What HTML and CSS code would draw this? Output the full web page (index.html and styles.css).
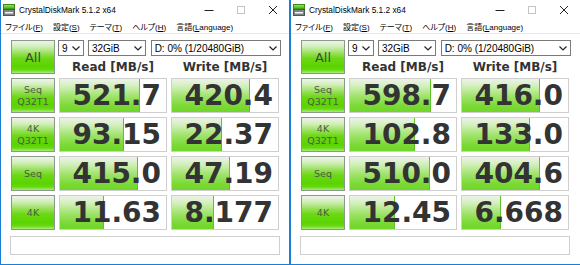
FILE: index.html
```html
<!DOCTYPE html>
<html lang="ja">
<head>
<meta charset="utf-8">
<title>CrystalDiskMark</title>
<link rel="stylesheet" href="styles.css">
</head>
<body>
<div class="desk">
  <div class="win">
    <div class="titlebar">
      <svg class="appicon" width="12" height="12" viewBox="0 0 12 12"><defs><linearGradient id="g1" x1="0" y1="0" x2="0" y2="1"><stop offset="0" stop-color="#9be86a"/><stop offset="1" stop-color="#3cb000"/></linearGradient></defs><rect x="0.5" y="0.5" width="11" height="4.5" fill="url(#g1)" stroke="#3a8a1a" stroke-width="1"/><rect x="0.5" y="5.5" width="11" height="6" fill="#7d8388" stroke="#50565a" stroke-width="1"/><rect x="2" y="8" width="8" height="1.5" fill="#f4f4f4"/></svg>
      <span class="title">CrystalDiskMark 5.1.2 x64</span>
      <div class="controls">
        <span class="ctl"><svg width="10" height="10" viewBox="0 0 10 10"><line x1="0.5" y1="5.5" x2="9.5" y2="5.5" stroke="#222" stroke-width="1"/></svg></span>
        <span class="ctl"><svg width="10" height="10" viewBox="0 0 10 10"><rect x="1.5" y="1.5" width="7" height="7" fill="none" stroke="#c4c4c4" stroke-width="1"/></svg></span>
        <span class="ctl"><svg width="10" height="10" viewBox="0 0 10 10"><path d="M1 1 L9 9 M9 1 L1 9" stroke="#222" stroke-width="1"/></svg></span>
      </div>
    </div>
    <div class="menubar">
      <span>ファイル(<u>F</u>)</span><span>設定(<u>S</u>)</span><span>テーマ(<u>T</u>)</span><span>ヘルプ(<u>H</u>)</span><span>言語(<u>L</u>anguage)</span>
    </div>
    <div class="content">
      <div class="btn all">All</div>
      <div class="combos">
        <div class="combo c1"><span>9</span><svg width="8" height="5" viewBox="0 0 8 5"><polyline points="0.5,0.5 4,4 7.5,0.5" fill="none" stroke="#222" stroke-width="1.2"/></svg></div>
        <div class="combo c2"><span>32GiB</span><svg width="8" height="5" viewBox="0 0 8 5"><polyline points="0.5,0.5 4,4 7.5,0.5" fill="none" stroke="#222" stroke-width="1.2"/></svg></div>
        <div class="combo c3"><span>D: 0% (1/20480GiB)</span><svg width="8" height="5" viewBox="0 0 8 5"><polyline points="0.5,0.5 4,4 7.5,0.5" fill="none" stroke="#222" stroke-width="1.2"/></svg></div>
      </div>
      <div class="head">Read [MB/s]</div>
      <div class="head">Write [MB/s]</div>

      <div class="btn"><span>Seq</span><span>Q32T1</span></div>
      <div class="cell"><div class="bar" style="width:80px"></div><div class="val">521.7</div></div>
      <div class="cell"><div class="bar" style="width:78px"></div><div class="val">420.4</div></div>

      <div class="btn"><span>4K</span><span>Q32T1</span></div>
      <div class="cell"><div class="bar" style="width:64px"></div><div class="val">93.15</div></div>
      <div class="cell"><div class="bar" style="width:50px"></div><div class="val">22.37</div></div>

      <div class="btn"><span>Seq</span></div>
      <div class="cell"><div class="bar" style="width:78px"></div><div class="val">415.0</div></div>
      <div class="cell"><div class="bar" style="width:58px"></div><div class="val">47.19</div></div>

      <div class="btn"><span>4K</span></div>
      <div class="cell"><div class="bar" style="width:44px"></div><div class="val">11.63</div></div>
      <div class="cell"><div class="bar" style="width:42px"></div><div class="val">8.177</div></div>

      <div class="comment"></div>
    </div>
  </div>

  <div class="win second">
    <div class="titlebar">
      <svg class="appicon" width="12" height="12" viewBox="0 0 12 12"><defs><linearGradient id="g2" x1="0" y1="0" x2="0" y2="1"><stop offset="0" stop-color="#9be86a"/><stop offset="1" stop-color="#3cb000"/></linearGradient></defs><rect x="0.5" y="0.5" width="11" height="4.5" fill="url(#g2)" stroke="#3a8a1a" stroke-width="1"/><rect x="0.5" y="5.5" width="11" height="6" fill="#7d8388" stroke="#50565a" stroke-width="1"/><rect x="2" y="8" width="8" height="1.5" fill="#f4f4f4"/></svg>
      <span class="title">CrystalDiskMark 5.1.2 x64</span>
      <div class="controls">
        <span class="ctl"><svg width="10" height="10" viewBox="0 0 10 10"><line x1="0.5" y1="5.5" x2="9.5" y2="5.5" stroke="#222" stroke-width="1"/></svg></span>
        <span class="ctl"><svg width="10" height="10" viewBox="0 0 10 10"><rect x="1.5" y="1.5" width="7" height="7" fill="none" stroke="#c4c4c4" stroke-width="1"/></svg></span>
        <span class="ctl"><svg width="10" height="10" viewBox="0 0 10 10"><path d="M1 1 L9 9 M9 1 L1 9" stroke="#222" stroke-width="1"/></svg></span>
      </div>
    </div>
    <div class="menubar">
      <span>ファイル(<u>F</u>)</span><span>設定(<u>S</u>)</span><span>テーマ(<u>T</u>)</span><span>ヘルプ(<u>H</u>)</span><span>言語(<u>L</u>anguage)</span>
    </div>
    <div class="content">
      <div class="btn all">All</div>
      <div class="combos">
        <div class="combo c1"><span>9</span><svg width="8" height="5" viewBox="0 0 8 5"><polyline points="0.5,0.5 4,4 7.5,0.5" fill="none" stroke="#222" stroke-width="1.2"/></svg></div>
        <div class="combo c2"><span>32GiB</span><svg width="8" height="5" viewBox="0 0 8 5"><polyline points="0.5,0.5 4,4 7.5,0.5" fill="none" stroke="#222" stroke-width="1.2"/></svg></div>
        <div class="combo c3"><span>D: 0% (1/20480GiB)</span><svg width="8" height="5" viewBox="0 0 8 5"><polyline points="0.5,0.5 4,4 7.5,0.5" fill="none" stroke="#222" stroke-width="1.2"/></svg></div>
      </div>
      <div class="head">Read [MB/s]</div>
      <div class="head">Write [MB/s]</div>

      <div class="btn"><span>Seq</span><span>Q32T1</span></div>
      <div class="cell"><div class="bar" style="width:81px"></div><div class="val">598.7</div></div>
      <div class="cell"><div class="bar" style="width:78px"></div><div class="val">416.0</div></div>

      <div class="btn"><span>4K</span><span>Q32T1</span></div>
      <div class="cell"><div class="bar" style="width:65px"></div><div class="val">102.8</div></div>
      <div class="cell"><div class="bar" style="width:68px"></div><div class="val">133.0</div></div>

      <div class="btn"><span>Seq</span></div>
      <div class="cell"><div class="bar" style="width:80px"></div><div class="val">510.0</div></div>
      <div class="cell"><div class="bar" style="width:78px"></div><div class="val">404.6</div></div>

      <div class="btn"><span>4K</span></div>
      <div class="cell"><div class="bar" style="width:45px"></div><div class="val">12.45</div></div>
      <div class="cell"><div class="bar" style="width:39px"></div><div class="val">6.668</div></div>

      <div class="comment"></div>
    </div>
  </div>
</div>
</body>
</html>
```

FILE: styles.css
```css
html, body {
  margin: 0;
  padding: 0;
  background: #ffffff;
}
.desk {
  display: flex;
  width: 580px;
  height: 265px;
  overflow: hidden;
}
.win {
  width: 290px;
  height: 265px;
  box-sizing: border-box;
  border: 1px solid #1a7fd4;
  border-top: none;
  background: #ffffff;
  display: flex;
  flex-direction: column;
  flex: none;
}
.win.second {
  border-right: none;
}
.titlebar {
  height: 19px;
  display: flex;
  align-items: center;
  padding-left: 2px;
  background: #ffffff;
}
.appicon {
  display: block;
  flex: none;
}
.title {
  margin-left: 4px;
  font-family: "Liberation Sans", Arial, sans-serif;
  font-size: 8.3px;
  color: #000;
  white-space: nowrap;
}
.controls {
  margin-left: auto;
  display: flex;
  height: 19px;
}
.ctl {
  width: 32px;
  display: flex;
  align-items: center;
  justify-content: center;
}
.ctl svg { display: block; }
.menubar {
  height: 14px;
  display: flex;
  align-items: center;
  gap: 10px;
  padding-left: 4px;
  font-family: "Liberation Sans", "Noto Sans CJK JP", sans-serif;
  font-size: 8px;
  font-feature-settings: "palt";
  color: #000;
  border-bottom: 1px solid #e8e8e8;
  white-space: nowrap;
}
.menubar u { text-decoration-thickness: 1px; text-underline-offset: 1px; }
.content {
  display: grid;
  grid-template-columns: 44px 108px 108px;
  grid-template-rows: 16px 14px 35px 35px 35px 35px 21px;
  column-gap: 4px;
  row-gap: 4px;
  padding: 6px 0 0 10px;
}
.btn {
  box-sizing: border-box;
  border: 1px solid #8b9a86;
  background: linear-gradient(to bottom, #f0f2ee 0%, #d0efb6 18%, #98e05c 38%, #6cd814 55%, #5ad400 80%, #66d80e 90%, #a6ec7c 100%);
  display: flex;
  flex-direction: column;
  align-items: center;
  justify-content: center;
  font-family: "DejaVu Sans", Verdana, sans-serif;
  font-size: 9.5px;
  line-height: 12px;
  color: #4e5a46;
}
.btn.all {
  grid-row: 1 / 3;
  font-size: 13px;
  padding-top: 2px;
  color: #3f4a38;
}
.combos {
  grid-column: 2 / 4;
  display: flex;
  gap: 4px;
  margin: 0 -2px 0 -1px;
}
.combo {
  box-sizing: border-box;
  height: 16px;
  border: 1px solid #7a7a7a;
  background: #fff;
  display: flex;
  align-items: center;
  justify-content: space-between;
  padding: 0 3px 0 3px;
  font-family: "Liberation Sans", Arial, sans-serif;
  font-size: 10px;
  color: #000;
  white-space: nowrap;
}
.combo svg { display: block; flex: none; }
.c1 { width: 26px; }
.c2 { width: 58px; }
.c3 { width: 131px; margin-left: 1px; }
.head {
  display: flex;
  align-items: center;
  justify-content: center;
  font-family: "DejaVu Sans", Verdana, sans-serif;
  font-weight: bold;
  font-size: 12px;
  color: #333;
  white-space: nowrap;
}
.cell {
  box-sizing: border-box;
  border: 1px solid #cfcfcf;
  background: #fff;
  display: grid;
  grid-template: 1fr / 1fr;
  overflow: hidden;
}
.bar {
  grid-area: 1 / 1;
  justify-self: start;
  height: 100%;
  box-sizing: border-box;
  border-right: 1px solid #5fc22a;
  background: linear-gradient(to bottom, #eef2eb 0%, #d2f0ba 22%, #a4e472 50%, #7cda36 80%, #70d628 100%);
}
.val {
  grid-area: 1 / 1;
  align-self: center;
  justify-self: end;
  padding-right: 5px;
  font-family: "DejaVu Sans", Verdana, sans-serif;
  font-weight: bold;
  font-size: 28px;
  line-height: 33px;
  color: #333333;
}
.comment {
  grid-column: 1 / 4;
  margin: 2px -1px 0 -1px;
  border: 1px solid #cfcfcf;
  background: #fff;
}
```
